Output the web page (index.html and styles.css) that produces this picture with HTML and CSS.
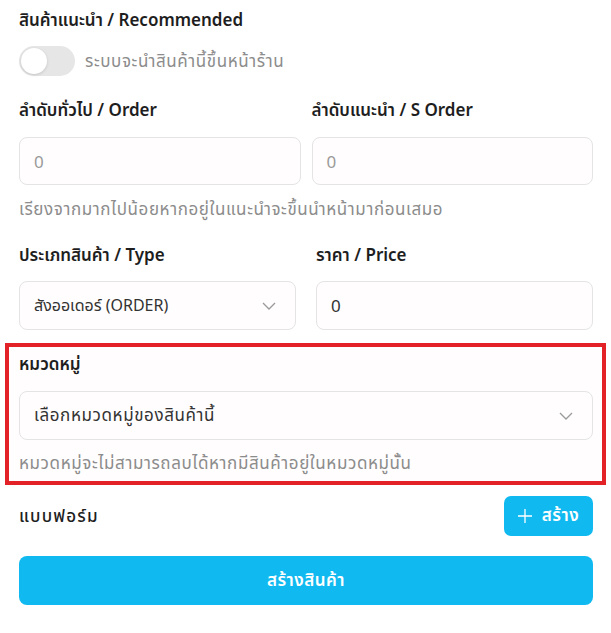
FILE: index.html
```html
<!DOCTYPE html>
<html lang="th">
<head>
<meta charset="utf-8">
<title>สร้างสินค้า</title>
<link rel="stylesheet" href="styles.css">
</head>
<body>
<div class="page">
  <div class="label">สินค้าแนะนำ / Recommended</div>
  <div class="toggle-row">
    <span class="toggle"><span class="knob"></span></span>
    <span class="muted">ระบบจะนำสินค้านี้ขึ้นหน้าร้าน</span>
  </div>

  <div class="grid2 grid-a">
    <div class="field">
      <div class="label">ลำดับทั่วไป / Order</div>
      <div class="input placeholder">0</div>
    </div>
    <div class="field">
      <div class="label">ลำดับแนะนำ / S Order</div>
      <div class="input placeholder">0</div>
    </div>
  </div>
  <div class="muted help">เรียงจากมากไปน้อยหากอยู่ในแนะนำจะขึ้นนำหน้ามาก่อนเสมอ</div>

  <div class="grid2 grid-b">
    <div class="field">
      <div class="label">ประเภทสินค้า / Type</div>
      <div class="input select">
        <span>สังออเดอร์ (ORDER)</span>
        <svg class="chev" width="14" height="8" viewBox="0 0 14 8"><path d="M1 1l6 6 6-6" fill="none" stroke="#9a9a9a" stroke-width="1.3"/></svg>
      </div>
    </div>
    <div class="field">
      <div class="label">ราคา / Price</div>
      <div class="input value">0</div>
    </div>
  </div>

  <section class="highlight">
    <div class="label">หมวดหมู่</div>
    <div class="input select wide">
      <span class="thai">เลือกหมวดหมู่ของสินค้านี้</span>
      <svg class="chev" width="14" height="8" viewBox="0 0 14 8"><path d="M1 1l6 6 6-6" fill="none" stroke="#9a9a9a" stroke-width="1.3"/></svg>
    </div>
    <div class="muted help">หมวดหมู่จะไม่สามารถลบได้หากมีสินค้าอยู่ในหมวดหมู่นั้น</div>
  </section>

  <div class="form-row">
    <div class="label plain">แบบฟอร์ม</div>
    <button class="btn small"><svg width="14" height="14" viewBox="0 0 14 14"><path d="M7 0v14M0 7h14" stroke="#fff" stroke-width="1.3"/></svg><span>สร้าง</span></button>
  </div>

  <button class="btn big">สร้างสินค้า</button>
</div>
</body>
</html>
```

FILE: styles.css
```css
* { box-sizing: border-box; }
body {
  margin: 0;
  background: #ffffff;
  font-family: "Noto Sans", "Noto Sans Thai", "DejaVu Sans", sans-serif;
  color: #222;
}
.page {
  padding: 8px 18px 0 19px;
  display: flex;
  flex-direction: column;
}
.label {
  font-size: 17px;
  line-height: 24px;
  font-weight: 600;
  color: #1e1e1e;
}
.label.plain { font-weight: 500; letter-spacing: 1.2px; }
.muted {
  font-size: 17px;
  line-height: 24px;
  color: #8c8c8c;
  letter-spacing: 0.6px;
}
.toggle-row {
  margin-top: 14px;
  height: 30px;
  display: flex;
  align-items: center;
  gap: 10px;
}
.toggle {
  width: 56px;
  height: 30px;
  border-radius: 15px;
  background: #e6e6e6;
  padding: 2px;
  display: flex;
}
.knob {
  width: 26px;
  height: 26px;
  border-radius: 50%;
  background: #fff;
  box-shadow: 0 1px 3px rgba(0,0,0,0.15);
}
.grid2 {
  display: grid;
  grid-template-columns: 1fr 1fr;
  margin-top: 22px;
}
.grid-a { column-gap: 11px; }
.grid-b { column-gap: 20px; }
.field .label { margin-bottom: 15px; }
.grid-b .field .label { margin-bottom: 14px; }
.input {
  height: 48px;
  border: 1px solid #e4e4e4;
  border-radius: 8px;
  background: #fffdfd;
  padding: 0 14px;
  display: flex;
  align-items: center;
  font-size: 16px;
}
.grid-b .input { height: 49px; }
.placeholder { color: #9a9a9a; font-size: 17px; }
.value { color: #333; font-size: 17px; }
.select { justify-content: space-between; color: #333; padding-right: 19px; }
.thai { font-size: 17px; letter-spacing: 0.6px; }
.help { margin-top: 12px; }
.highlight {
  margin: 13px -13px 0 -14px;
  border: 4px solid #e32227;
  padding: 5px 9px 6px 10px;
  background: #fffdfd;
}
.highlight .label { margin-bottom: 15px; }
.highlight .input { height: 49px; }
.highlight .help { margin-top: 11px; }
.form-row {
  margin-top: 11px;
  display: flex;
  justify-content: space-between;
  align-items: center;
}
.btn {
  border: 0;
  background: #10baf1;
  color: #fff;
  font-family: inherit;
  font-weight: 600;
  font-size: 17px;
  letter-spacing: 0.5px;
}
.btn.small {
  width: 89px;
  height: 40px;
  border-radius: 7px;
  display: flex;
  align-items: center;
  justify-content: center;
  gap: 10px;
}
.btn.big {
  margin-top: 20px;
  height: 49px;
  border-radius: 8px;
  width: 100%;
}
```
